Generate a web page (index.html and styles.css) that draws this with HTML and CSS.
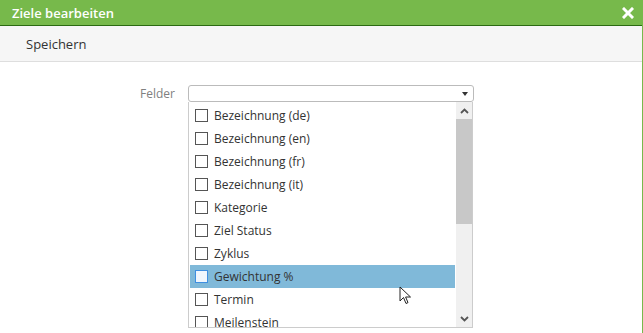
FILE: index.html
```html
<!DOCTYPE html>
<html lang="de">
  <head>
    <meta charset="UTF-8" />
    <title>Ziele bearbeiten</title>
    <link rel="stylesheet" href="styles.css">
  </head>
  <body>
    <div class="dialog">
      <div class="titlebar">
        <span class="title">Ziele bearbeiten</span>
        <span class="close">
          <svg width="12" height="12" viewBox="0 0 12 12">
            <path d="M2 2 L10 10 M10 2 L2 10" stroke="#fff" stroke-width="3" stroke-linecap="square" />
          </svg>
        </span>
      </div>

      <div class="toolbar">
        <button class="tool-btn">Speichern</button>
      </div>

      <div class="form">
        <div class="form-row">
          <label class="field-label">Felder</label>
          <div class="multiselect">
            <div class="select-box">
              <span class="caret"></span>
            </div>
            <div class="dropdown">
              <ul class="options">
                <li><span class="check"></span>Bezeichnung (de)</li>
                <li><span class="check"></span>Bezeichnung (en)</li>
                <li><span class="check"></span>Bezeichnung (fr)</li>
                <li><span class="check"></span>Bezeichnung (it)</li>
                <li><span class="check"></span>Kategorie</li>
                <li><span class="check"></span>Ziel Status</li>
                <li><span class="check"></span>Zyklus</li>
                <li class="active"><span class="check"></span>Gewichtung %</li>
                <li><span class="check"></span>Termin</li>
                <li><span class="check"></span>Meilenstein</li>
              </ul>
              <div class="scrollbar">
                <div class="scroll-arrow">
                  <svg width="9" height="6" viewBox="0 0 9 6"><path d="M1 5 L4.5 1.5 L8 5" fill="none" stroke="#555" stroke-width="1.8" /></svg>
                </div>
                <div class="scroll-thumb"></div>
                <div class="scroll-track"></div>
                <div class="scroll-arrow">
                  <svg width="9" height="6" viewBox="0 0 9 6"><path d="M1 1 L4.5 4.5 L8 1" fill="none" stroke="#555" stroke-width="1.8" /></svg>
                </div>
              </div>
            </div>
            <svg class="cursor" width="14" height="20" viewBox="0 0 14 20">
              <path d="M1 1 L1 15 L4.5 11.5 L7 17.5 L9 16.6 L6.6 11 L11.5 11 Z" fill="#fff" stroke="#222" stroke-width="1" stroke-linejoin="round" />
            </svg>
          </div>
        </div>
      </div>
    </div>
  </body>
</html>
```

FILE: styles.css
```css
body {
  margin: 0;
  font-family: "Open Sans", "Liberation Sans", sans-serif;
  background: #fff;
  overflow: hidden;
}
.dialog {
  width: 642px;
  height: 333px;
  border-right: 1px solid #77b94b;
  background: #fff;
}
.titlebar {
  height: 25px;
  background: #77b94b;
  border-bottom: 1px solid #2b6a12;
  display: flex;
  align-items: center;
  justify-content: space-between;
  padding: 0 8px 0 12px;
}
.title {
  color: #fff;
  font-size: 13px;
  font-weight: 600;
}
.close {
  display: flex;
  margin-top: 1px;
}
.toolbar {
  height: 35px;
  background: #f6f6f6;
  border-bottom: 1px solid #dedede;
  display: flex;
  align-items: center;
  padding-left: 26px;
}
.tool-btn {
  font-family: inherit;
  font-size: 13px;
  color: #333;
  background: none;
  border: none;
  padding: 0;
}
.form {
  padding-top: 23px;
}
.form-row {
  display: flex;
  align-items: flex-start;
}
.field-label {
  width: 188px;
  text-align: right;
  padding-right: 13px;
  box-sizing: border-box;
  font-size: 12px;
  color: #808080;
  line-height: 17px;
}
.multiselect {
  position: relative;
  width: 286px;
}
.select-box {
  height: 15px;
  border: 1px solid #bbb;
  border-radius: 3px;
  background: #fff;
  display: flex;
  align-items: center;
  justify-content: flex-end;
  padding-right: 5px;
}
.caret {
  width: 0;
  height: 0;
  border-left: 3.5px solid transparent;
  border-right: 3.5px solid transparent;
  border-top: 4px solid #333;
  margin-top: 1px;
}
.dropdown {
  width: 283px;
  height: 225px;
  border: 1px solid #ccc;
  border-top: none;
  display: flex;
  overflow: hidden;
  background: #fff;
}
.options {
  list-style: none;
  margin: 0;
  padding: 2px 0 0 1px;
  flex: 1;
}
.options li {
  height: 23px;
  display: flex;
  align-items: center;
  font-size: 12px;
  color: #333;
  padding-left: 5px;
}
.options li.active {
  background: #80b9d9;
}
.check {
  width: 11px;
  height: 11px;
  border: 1px solid #555;
  background: #fff;
  margin-right: 6px;
  flex-shrink: 0;
}
.active .check {
  border-color: #3f8fe0;
  background: #f0f6fd;
}
.scrollbar {
  width: 16px;
  margin-left: 1px;
  background: #f0f0f0;
  display: flex;
  flex-direction: column;
}
.scroll-arrow {
  height: 17px;
  display: flex;
  align-items: center;
  justify-content: center;
}
.scroll-thumb {
  height: 105px;
  background: #c8c8c8;
}
.scroll-track {
  flex: 1;
}
.cursor {
  position: absolute;
  left: 211px;
  top: 201px;
}
```
